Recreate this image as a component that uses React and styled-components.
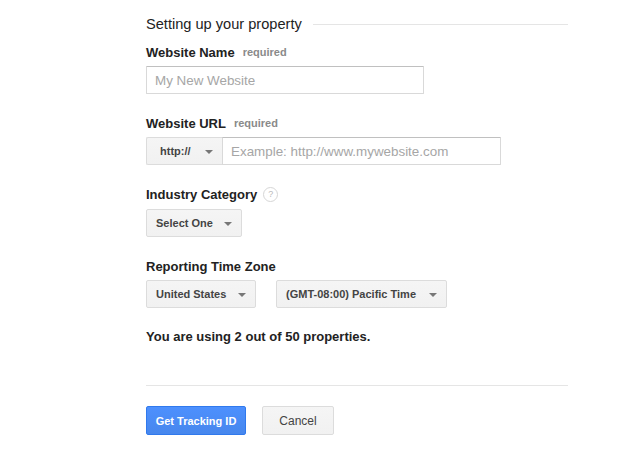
import React from 'react'
import styled, { createGlobalStyle } from 'styled-components'

const GlobalStyle = createGlobalStyle`
	body {
		margin: 0;
		background: #fff;
		font-family: "Liberation Sans", Arial, sans-serif;
		color: #222;
	}
`

const Page = styled.div`
	width: 422px;
	padding: 13px 0 0 146px;
`

const TitleRow = styled.div`
	display: flex;
	align-items: center;
	gap: 11px;
	height: 22px;
`

const Title = styled.h2`
	margin: 0;
	font-size: 14.6px;
	font-weight: normal;
	color: #222;
	white-space: nowrap;
`

const Rule = styled.div`
	flex: 1;
	height: 1px;
	background: #e5e5e5;
	margin-top: 1px;
`

const Field = styled.div`
	margin-top: ${props => props.gap || 20}px;
`

const Label = styled.div`
	display: flex;
	align-items: center;
	height: 16px;
	padding-top: 1px;
	margin-bottom: ${props => props.below || 6}px;
	font-size: 13px;
	font-weight: bold;
	color: #222;
`

const Required = styled.span`
	margin-left: 8px;
	font-size: 11px;
	color: #8a8a8a;
`

const Help = styled.span`
	display: inline-flex;
	align-items: center;
	justify-content: center;
	margin-left: 6px;
	width: 13px;
	height: 13px;
	border: 1px solid #d6d6d6;
	border-radius: 50%;
	font-size: 9px;
	font-weight: normal;
	color: #bbb;
`

const TextInput = styled.input`
	box-sizing: border-box;
	width: ${props => props.w}px;
	height: 28px;
	padding: 0 8px;
	border: 1px solid #d9d9d9;
	border-top-color: #c0c0c0;
	border-radius: ${props => (props.joined ? '0 1px 1px 0' : '1px')};
	font-family: inherit;
	font-size: 13.4px;
	color: #222;
	outline: none;
	&::placeholder {
		color: #a6a6a6;
	}
`

const Row = styled.div`
	display: flex;
	gap: ${props => props.gap || 0}px;
`

const Select = styled.div`
	box-sizing: border-box;
	display: flex;
	align-items: center;
	justify-content: space-between;
	width: ${props => props.w}px;
	height: 28px;
	padding: 0 9px 0 ${props => props.pl || 9}px;
	background: linear-gradient(#f5f5f5, #f1f1f1);
	border: 1px solid #dcdcdc;
	border-radius: ${props => (props.joined ? '2px 0 0 2px' : '2px')};
	${props => props.joined && 'border-right: none;'}
	font-size: 11px;
	font-weight: bold;
	color: #444;
	white-space: nowrap;
`

const Arrow = styled.span`
	width: 0;
	height: 0;
	margin-top: 2px;
	border-left: 4px solid transparent;
	border-right: 4px solid transparent;
	border-top: 4px solid #777;
`

const Usage = styled.p`
	margin: 20px 0 0;
	height: 17px;
	padding-top: 1px;
	line-height: 16px;
	font-size: 13px;
	font-weight: bold;
	color: #222;
`

const Divider = styled.hr`
	margin: 39px 0 0;
	border: none;
	border-top: 1px solid #e5e5e5;
`

const Actions = styled.div`
	display: flex;
	gap: 16px;
	margin-top: 20px;
`

const Button = styled.button`
	box-sizing: border-box;
	height: 29px;
	width: ${props => props.w}px;
	padding: 0;
	border-radius: 2px;
	font-family: inherit;
	cursor: pointer;
	border: 1px solid ${props => (props.primary ? '#3079ed' : '#dcdcdc')};
	background: ${props => (props.primary ? 'linear-gradient(#4d90fe, #4787ed)' : 'linear-gradient(#f5f5f5, #f1f1f1)')};
	color: ${props => (props.primary ? '#fff' : '#444')};
	font-size: ${props => (props.primary ? 11 : 12)}px;
	font-weight: ${props => (props.primary ? 'bold' : 'normal')};
`

export default function App () {
	return (
		<Page>
			<GlobalStyle />
			<TitleRow>
				<Title>Setting up your property</Title>
				<Rule />
			</TitleRow>

			<Field gap={8}>
				<Label>Website Name<Required>required</Required></Label>
				<TextInput w={278} placeholder="My New Website" />
			</Field>

			<Field>
				<Label>Website URL<Required>required</Required></Label>
				<Row>
					<Select w={76} pl={13} joined>http://<Arrow /></Select>
					<TextInput w={279} joined placeholder="Example: http://www.mywebsite.com" />
				</Row>
			</Field>

			<Field>
				<Label below={7}>Industry Category<Help>?</Help></Label>
				<Select w={96}>Select One<Arrow /></Select>
			</Field>

			<Field>
				<Label>Reporting Time Zone</Label>
				<Row gap={20}>
					<Select w={110}>United States<Arrow /></Select>
					<Select w={171}>(GMT-08:00) Pacific Time<Arrow /></Select>
				</Row>
			</Field>

			<Usage>You are using 2 out of 50 properties.</Usage>

			<Divider />

			<Actions>
				<Button primary w={100}>Get Tracking ID</Button>
				<Button w={72}>Cancel</Button>
			</Actions>
		</Page>
	)
}
